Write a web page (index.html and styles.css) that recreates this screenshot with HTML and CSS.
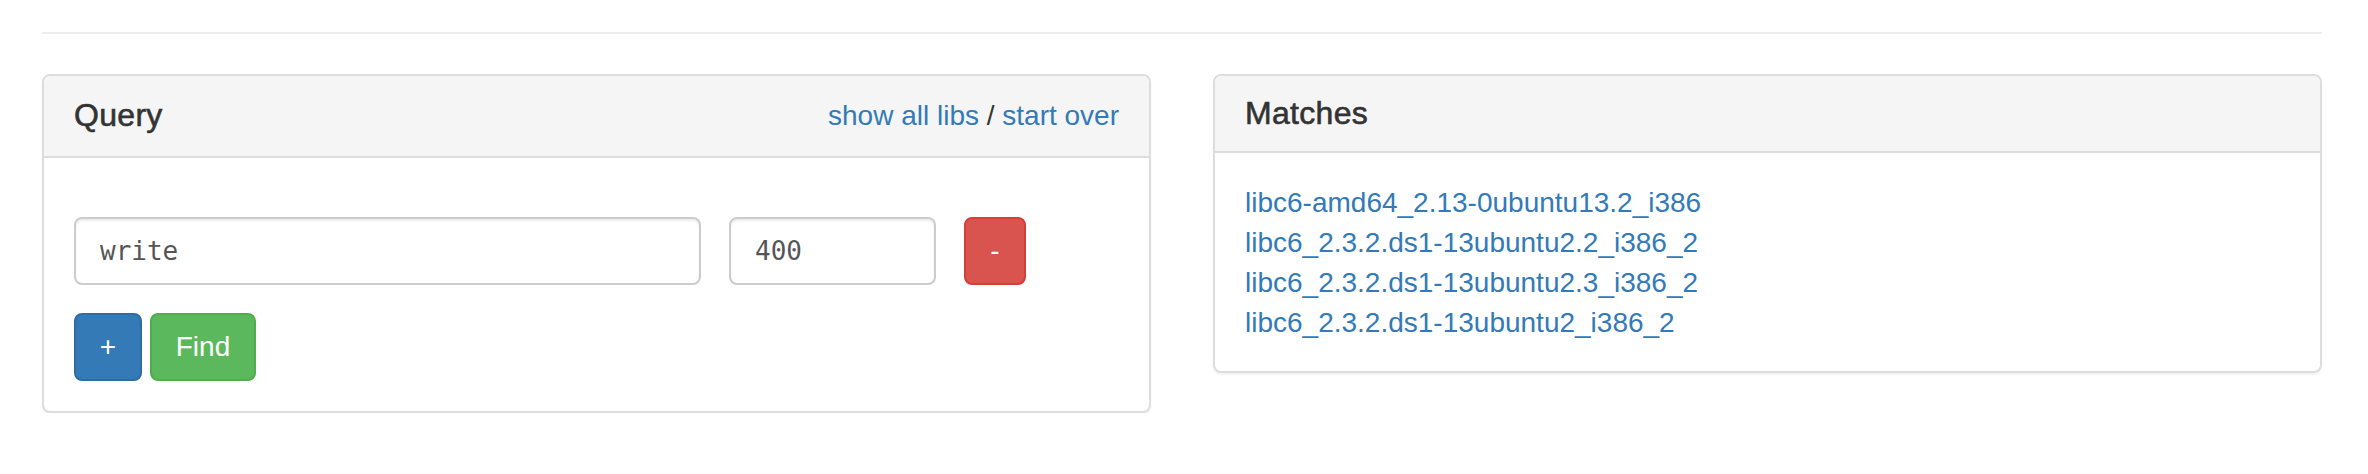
FILE: index.html
```html
<!DOCTYPE html>
<html>
<head>
<meta charset="utf-8">
<title>libc database search</title>
<link rel="stylesheet" href="styles.css">
</head>
<body>
<div class="container">
  <hr class="divider">
  <div class="columns">
    <section class="panel">
      <div class="panel-heading heading-split">
        <h3 class="panel-title">Query</h3>
        <div class="heading-links"><a href="#">show all libs</a> / <a href="#">start over</a></div>
      </div>
      <div class="panel-body query-body">
        <div class="query-row">
          <input class="field field-name" type="text" value="write">
          <input class="field field-addr" type="text" value="400">
          <button class="btn btn-danger" type="button">-</button>
        </div>
        <div class="action-row">
          <button class="btn btn-primary" type="button">+</button>
          <button class="btn btn-success" type="button">Find</button>
        </div>
      </div>
    </section>
    <section class="panel">
      <div class="panel-heading">
        <h3 class="panel-title">Matches</h3>
      </div>
      <div class="panel-body matches-body">
        <a class="match" href="#">libc6-amd64_2.13-0ubuntu13.2_i386</a>
        <a class="match" href="#">libc6_2.3.2.ds1-13ubuntu2.2_i386_2</a>
        <a class="match" href="#">libc6_2.3.2.ds1-13ubuntu2.3_i386_2</a>
        <a class="match" href="#">libc6_2.3.2.ds1-13ubuntu2_i386_2</a>
      </div>
    </section>
  </div>
</div>
</body>
</html>
```
FILE: styles.css
```css
* {
  box-sizing: border-box;
}

html, body {
  margin: 0;
  padding: 0;
  background: #fff;
}

body {
  font-family: "Liberation Sans", Arial, Helvetica, sans-serif;
  font-size: 28px;
  line-height: 40px;
  color: #333;
}

a {
  color: #337ab7;
  text-decoration: none;
}

.container {
  width: 2280px;
  margin-left: 42px;
  padding-top: 32px;
}

.divider {
  margin: 0 0 40px 0;
  border: 0;
  border-top: 2px solid #eee;
  height: 0;
}

.columns {
  display: grid;
  grid-template-columns: 1109px 1109px;
  column-gap: 62px;
  align-items: start;
}

.panel {
  background: #fff;
  border: 2px solid #ddd;
  border-radius: 8px;
  box-shadow: 0 2px 2px rgba(0, 0, 0, 0.05);
  overflow: hidden;
}

.panel-heading {
  background: #f5f5f5;
  border-bottom: 2px solid #ddd;
  padding: 20px 30px;
}

.heading-split {
  display: flex;
  justify-content: space-between;
  align-items: center;
}

.panel-title {
  margin: 0;
  font-size: 32px;
  font-weight: normal;
  line-height: 35.2px;
  color: #333;
  -webkit-text-stroke: 0.6px #333;
  letter-spacing: 0.3px;
}

.heading-links {
  font-size: 28px;
  line-height: 40px;
  color: #333;
}

.panel-body {
  padding: 30px;
}

.query-body {
  padding-top: 59px;
}

.query-row {
  display: flex;
  gap: 28px;
  align-items: center;
}

.action-row {
  display: flex;
  gap: 8px;
  margin-top: 28px;
}

.field {
  height: 68px;
  padding: 12px 24px;
  font-family: "DejaVu Sans Mono", "Liberation Mono", monospace;
  font-size: 26px;
  color: #555;
  background: #fff;
  border: 2px solid #ccc;
  border-radius: 8px;
  box-shadow: inset 0 2px 2px rgba(0, 0, 0, 0.075);
  outline: none;
}

.field-name {
  width: 627px;
}

.field-addr {
  width: 207px;
}

.btn {
  height: 68px;
  padding: 0;
  font-family: "Liberation Sans", Arial, Helvetica, sans-serif;
  font-size: 28px;
  line-height: 40px;
  color: #fff;
  border: 2px solid transparent;
  border-radius: 8px;
  cursor: pointer;
}

.btn-danger {
  width: 62px;
  background: #d9534f;
  border-color: #d43f3a;
}

.btn-primary {
  width: 68px;
  background: #337ab7;
  border-color: #2e6da4;
}

.btn-success {
  width: 106px;
  background: #5cb85c;
  border-color: #4cae4c;
}

.matches-body {
  display: flex;
  flex-direction: column;
  align-items: flex-start;
  padding-bottom: 28px;
}

.match {
  line-height: 40px;
}
```
